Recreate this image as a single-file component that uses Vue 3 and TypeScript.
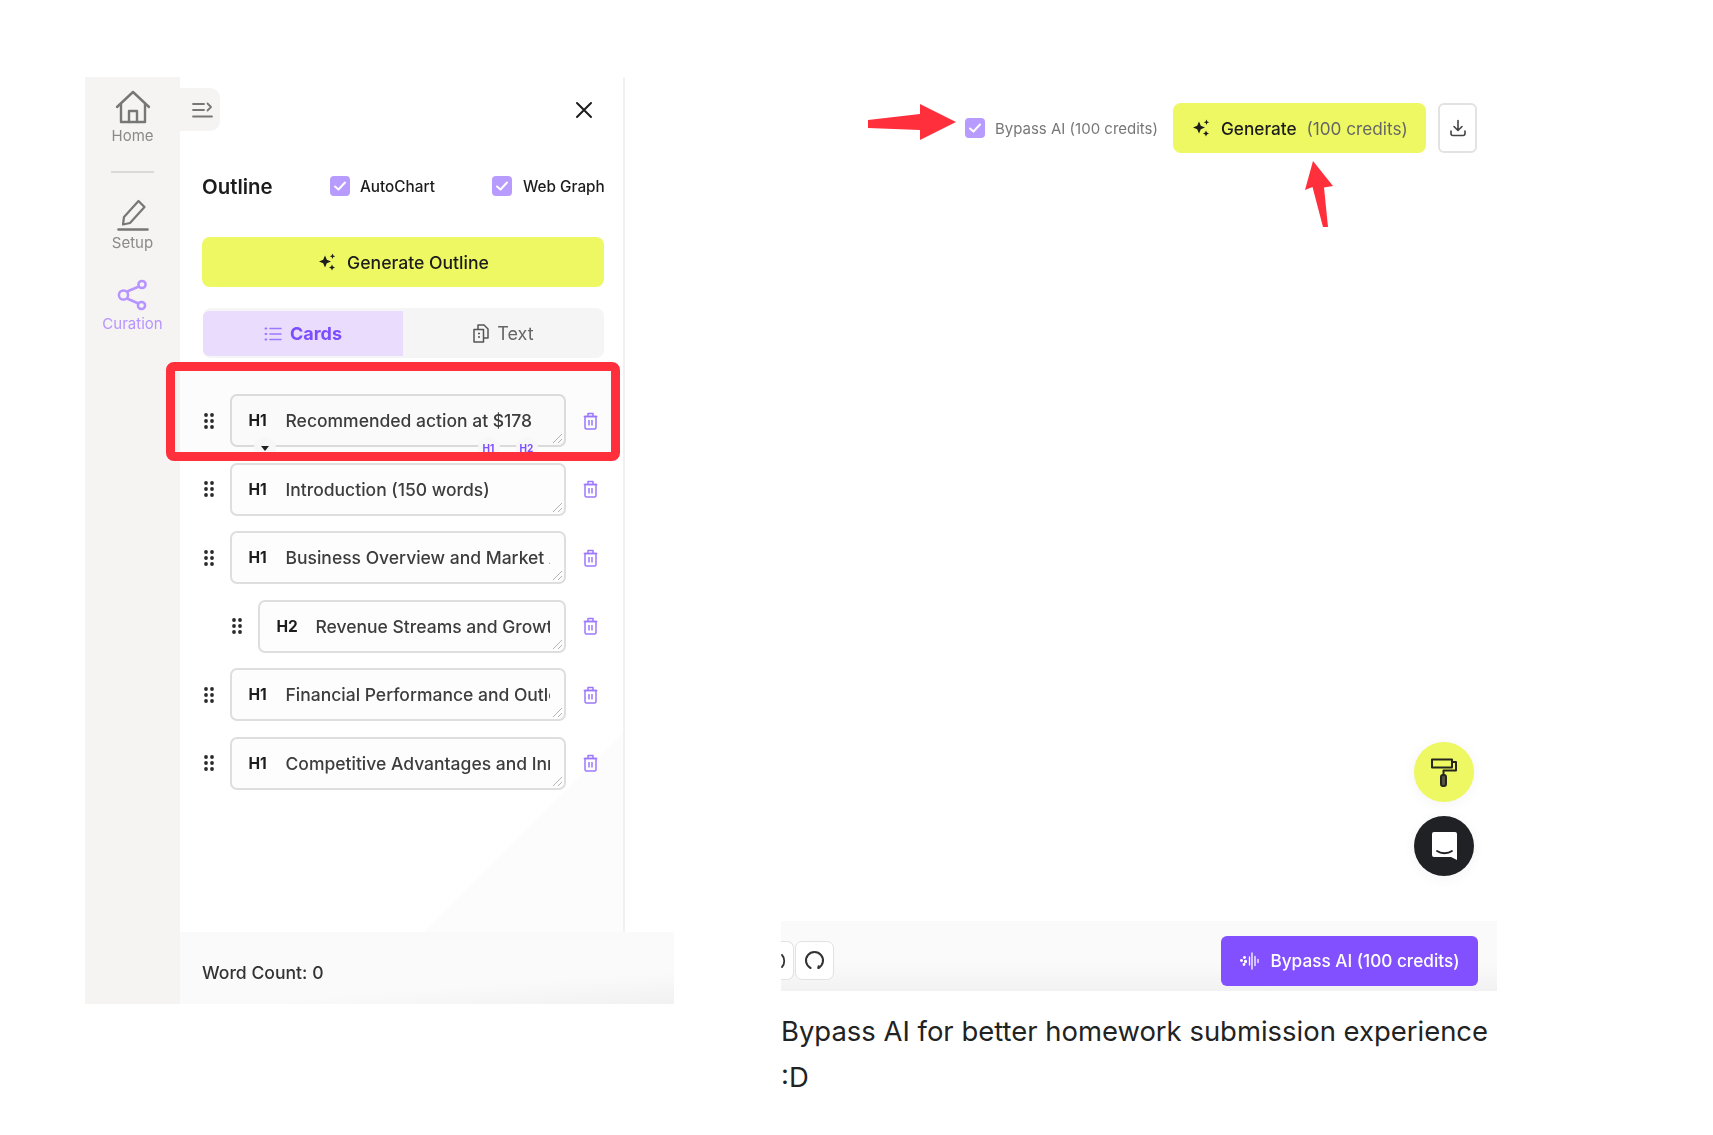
<script setup lang="ts">
interface OutlineRow {
  level: 'H1' | 'H2';
  title: string;
  menu?: boolean;
}

const rows: OutlineRow[] = [
  { level: 'H1', title: 'Recommended action at $178', menu: true },
  { level: 'H1', title: 'Introduction (150 words)' },
  { level: 'H1', title: 'Business Overview and Market Analysis' },
  { level: 'H2', title: 'Revenue Streams and Growth' },
  { level: 'H1', title: 'Financial Performance and Outlook' },
  { level: 'H1', title: 'Competitive Advantages and Innovation' }
];

const dots = [
  [2, 2], [8, 2],
  [2, 8], [8, 8],
  [2, 14], [8, 14]
];

const sparkle = 'M8 3.5 9.8 7.7 14 9.5 9.8 11.3 8 15.5 6.2 11.3 2 9.5 6.2 7.7ZM15.5 1.5l.8 1.9 1.9.8-1.9.8-.8 1.9-.8-1.9-1.9-.8 1.9-.8ZM15 12.5l.9 2.1 2.1.9-2.1.9-.9 2.1-.9-2.1-2.1-.9 2.1-.9Z';
</script>

<template>
  <div class="page">
    <section class="shot-left">
      <nav class="rail">
        <a class="rail-item home">
          <svg width="36" height="34" viewBox="0 0 36 34" fill="none" stroke="#777" stroke-width="2.4" stroke-linejoin="round" stroke-linecap="round">
            <path d="M2 17 18 2l16 15" />
            <path d="M6 14v18h24V14" />
            <path d="M14 32V21h8v11" />
          </svg>
          <span>Home</span>
        </a>
        <div class="rail-line"></div>
        <a class="rail-item setup">
          <svg width="32" height="32" viewBox="0 0 32 32" fill="none" stroke="#777" stroke-width="2.2" stroke-linejoin="round" stroke-linecap="round">
            <path d="M6 25.500 7 18 21.500 2l6 6L13 24Z" />
            <path d="M1.500 30.500h29" stroke-width="2.600" />
          </svg>
          <span>Setup</span>
        </a>
        <a class="rail-item curation">
          <svg width="30" height="32" viewBox="0 0 30 32" fill="none" stroke="#b794ff" stroke-width="2.5">
            <circle cx="6.5" cy="16" r="4.6" />
            <circle cx="25" cy="5.5" r="3.6" />
            <circle cx="24.5" cy="26.5" r="3.6" />
            <path d="M10 12.500 22 7.500M10 19.500l11.500 5" />
          </svg>
          <span>Curation</span>
        </a>
      </nav>

      <div class="main">
        <button class="collapse">
          <svg width="21" height="16" viewBox="0 0 21 16" fill="none" stroke="#777" stroke-width="1.800" stroke-linecap="round" stroke-linejoin="round">
            <path d="M1 2h11M1 8h11M1 14.500h19M15.500 1.500l3.500 3.500-3.500 3.500" />
          </svg>
        </button>

        <div class="panel">
          <div class="panel-top">
            <svg class="close" width="18" height="18" viewBox="0 0 18 18" fill="none" stroke="#1c1c1c" stroke-width="2" stroke-linecap="round">
              <path d="M2 2l14 14M16 2 2 16" />
            </svg>
          </div>

          <div class="outline-head">
            <h2>Outline</h2>
            <label class="check auto">
              <span class="box"><svg width="14" height="12" viewBox="0 0 14 12" fill="none" stroke="#fff" stroke-width="2" stroke-linecap="round" stroke-linejoin="round"><path d="M2 6.500l3.500 3L12 2.500" /></svg></span>
              AutoChart
            </label>
            <label class="check graph">
              <span class="box"><svg width="14" height="12" viewBox="0 0 14 12" fill="none" stroke="#fff" stroke-width="2" stroke-linecap="round" stroke-linejoin="round"><path d="M2 6.500l3.500 3L12 2.500" /></svg></span>
              Web Graph
            </label>
          </div>

          <button class="btn-yellow outline-btn">
            <svg width="20" height="20" viewBox="0 0 20 20" fill="#1c1c1c"><path :d="sparkle" /></svg>
            Generate Outline
          </button>

          <div class="tabs">
            <div class="tab active">
              <svg width="18" height="16" viewBox="0 0 18 16" fill="none" stroke="#9d78ff" stroke-width="1.600" stroke-linecap="round">
                <path d="M6 2.500h11M6 8h11M6 13.500h11" />
                <path d="M1.500 2.500h.8M1.500 8h.8M1.500 13.500h.8" stroke-width="2" />
              </svg>
              Cards
            </div>
            <div class="tab">
              <svg width="16" height="19" viewBox="0 0 16 19" fill="none" stroke="#555" stroke-width="1.500" stroke-linejoin="round">
                <path d="M1 5.500h9.500v12.500H1Z" />
                <path d="M5 5.500V1h6l4 4v9h-4.500" />
                <path d="M5 9.500h2M5 13h2" />
              </svg>
              Text
            </div>
          </div>

          <div class="rows">
            <div v-for="row in rows" :key="row.title" class="row" :class="{ nested: row.level === 'H2' }">
              <svg class="grip" width="10" height="16" viewBox="0 0 10 16" fill="#2a2a2a">
                <circle v-for="d in dots" :key="d.join()" :cx="d[0]" :cy="d[1]" r="1.900" />
              </svg>
              <div class="field">
                <b>{{ row.level }}</b>
                <span class="title">{{ row.title }}</span>
                <svg class="resize" width="11" height="11" viewBox="0 0 11 11" stroke="#b5b5b5" stroke-width="1">
                  <path d="M1 10 10 1M6 10l4-4" />
                </svg>
                <template v-if="row.menu">
                  <span class="chip caret"></span>
                  <span class="chip h1">H1</span>
                  <span class="chip h2">H2</span>
                </template>
              </div>
              <svg class="trash" width="15" height="18" viewBox="0 0 15 18" fill="none" stroke="#9d78ff" stroke-width="1.500" stroke-linejoin="round">
                <path d="M2 4.500h11V15.500a1.500 1.500 0 0 1-1.500 1.500h-8A1.500 1.500 0 0 1 2 15.500Z" />
                <path d="M.7 4.500h13.600M5 4.500V1.500h5v3M6 8v5.500M9 8v5.500" />
              </svg>
            </div>
          </div>
        </div>

        <footer class="word-count">Word Count: 0</footer>
      </div>

      <div class="red-box"></div>
    </section>

    <section class="shot-right">
      <div class="toolbar">
        <label class="check bypass">
          <span class="box"><svg width="14" height="12" viewBox="0 0 14 12" fill="none" stroke="#fff" stroke-width="2" stroke-linecap="round" stroke-linejoin="round"><path d="M2 6.500l3.500 3L12 2.500" /></svg></span>
          Bypass AI (100 credits)
        </label>
        <button class="btn-yellow generate">
          <svg width="20" height="20" viewBox="0 0 20 20" fill="#1c1c1c"><path :d="sparkle" /></svg>
          <span>Generate</span>
          <em>(100 credits)</em>
        </button>
        <button class="download">
          <svg width="18" height="18" viewBox="0 0 18 18" fill="none" stroke="#444" stroke-width="1.600" stroke-linecap="round" stroke-linejoin="round">
            <path d="M9 1.500v9.500M5 7.500 9 11.500l4-4" />
            <path d="M2 12v2.500a2 2 0 0 0 2 2h10a2 2 0 0 0 2-2V12" />
          </svg>
        </button>

        <svg class="arrow arrow-side" width="90" height="38" viewBox="0 0 90 38" fill="#ff2f3c">
          <path d="M0 17 52 11V1l36 18-36 18V27L0 25Z" />
        </svg>
        <svg class="arrow arrow-up" width="30" height="67" viewBox="0 0 30 67" fill="#ff2f3c">
          <path d="M9 0 29 25l-9 1.500L24 66h-5L8.500 26 1 29Z" />
        </svg>
      </div>

      <div class="fabs">
        <button class="fab paint">
          <svg width="26" height="29" viewBox="0 0 26 29" fill="none" stroke="#26261f" stroke-width="2" stroke-linejoin="round">
            <path d="M1 1.500h20v8H1Z" />
            <path d="M21 4h4v8.500H12.500V17" />
            <rect x="10" y="17" width="5" height="11" rx="2" fill="#55553f" />
          </svg>
        </button>
        <button class="fab chat">
          <svg width="27" height="30" viewBox="0 0 27 30" fill="#fff">
            <path d="M3 1h21a2 2 0 0 1 2 2v26l-6-3H3a2 2 0 0 1-2-2V3a2 2 0 0 1 2-2Z" />
            <path d="M6 20c4 3 11 3 15 0" fill="none" stroke="#202124" stroke-width="1.800" stroke-linecap="round" />
          </svg>
        </button>
      </div>

      <div class="action-bar">
        <div class="cut-btn">
          <svg width="6" height="16" viewBox="0 0 6 16" fill="none" stroke="#333" stroke-width="1.800" stroke-linecap="round"><path d="M1 2c3 3 3 9 0 12" /></svg>
        </div>
        <button class="refresh">
          <svg width="21" height="21" viewBox="0 0 21 21" fill="none" stroke="#333" stroke-width="2.100" stroke-linecap="round">
            <path d="M6.500 18A8.500 8.500 0 1 1 14.500 18" />
            <path d="M14.500 18l.1-1.800" />
          </svg>
        </button>
        <button class="bypass-btn">
          <svg width="22" height="18" viewBox="0 0 22 18" fill="#fff" stroke="#fff" stroke-width="1.300" stroke-linecap="round">
            <path d="M13 1v16M10.500 5v8M16 4.500v9M19 7.500v3" />
            <circle cx="2.500" cy="8.500" r=".8" />
            <circle cx="5.500" cy="5.500" r=".8" />
            <circle cx="6.500" cy="9.500" r="1" />
            <circle cx="5" cy="12.500" r=".8" />
          </svg>
          Bypass AI (100 credits)
        </button>
      </div>

      <p class="caption">Bypass AI for better homework submission experience<br />:D</p>
    </section>
  </div>
</template>

<style>
html,
body {
  background: #fff;
}
</style>

<style scoped>
.page {
  display: flex;
  align-items: flex-start;
  gap: 107px;
  padding: 77px 0 0 85px;
  font-family: Inter, "Liberation Sans", sans-serif;
  color: #1c1c1c;
}

button {
  font-family: inherit;
  border: none;
  padding: 0;
}

/* left screenshot */
.shot-left {
  position: relative;
  display: flex;
  width: 589px;
  height: 927px;
  filter: blur(0.35px);
}

.rail {
  width: 95px;
  flex: none;
  background: #f5f4f3;
  display: flex;
  flex-direction: column;
  align-items: center;
  padding-top: 13px;
  box-sizing: border-box;
}

.rail-item {
  display: flex;
  flex-direction: column;
  align-items: center;
  gap: 2.500px;
  font-size: 15px;
  line-height: 18px;
  color: #8a8a8a;
}

.rail-line {
  width: 43px;
  height: 2px;
  background: #d9d9d9;
  margin: 26px 0 26px;
}

.setup {
  gap: 3.500px;
}

.curation {
  margin-top: 27px;
  gap: 3.500px;
  color: #b794ff;
}

.main {
  position: relative;
  width: 494px;
  display: flex;
  flex-direction: column;
}

.collapse {
  position: absolute;
  left: 0;
  top: 11px;
  width: 40px;
  height: 43px;
  background: #f5f4f3;
  border-radius: 0 10px 10px 0;
  display: flex;
  align-items: center;
  justify-content: center;
  padding-left: 4px;
  box-sizing: border-box;
}

.panel {
  width: 445px;
  height: 855px;
  box-sizing: border-box;
  padding: 0 21px 0 22px;
  border-right: 2px solid #f1f1f1;
  background: linear-gradient(135deg, #fff 84.600%, #fcfcfc 84.600%);
}

.panel-top {
  height: 66px;
  display: flex;
  align-items: center;
  justify-content: flex-end;
}

.close {
  margin-right: 9px;
}

.outline-head {
  margin-top: 23px;
  height: 40px;
  display: flex;
  align-items: center;
}

.outline-head h2 {
  margin: 0;
  flex: none;
  width: 128px;
  font-size: 20.400px;
  font-weight: 600;
}

.check {
  display: flex;
  align-items: center;
  flex: none;
  font-size: 15.300px;
  font-weight: 500;
  white-space: nowrap;
}

.box {
  width: 20px;
  height: 20px;
  border-radius: 4px;
  background: #b79bff;
  display: flex;
  align-items: center;
  justify-content: center;
  margin-right: 10px;
}

.auto {
  width: 162px;
}

.graph .box {
  margin-right: 11px;
}

.btn-yellow {
  background: #edf862;
  border-radius: 8px;
  color: #1c1c1c;
  display: flex;
  align-items: center;
}

.outline-btn {
  margin-top: 31px;
  width: 402px;
  height: 50px;
  justify-content: center;
  gap: 10px;
  font-size: 17.600px;
  font-weight: 500;
}

.tabs {
  margin-top: 21px;
  width: 401px;
  margin-left: 1px;
  height: 50px;
  box-sizing: border-box;
  padding: 3px 0 2px 0;
  background: #f5f5f5;
  border-radius: 8px;
  display: grid;
  grid-template-columns: 200px 1fr;
}

.tab {
  display: flex;
  align-items: center;
  justify-content: center;
  gap: 8px;
  font-size: 18px;
  color: #666;
}

.tab.active {
  background: #e9dcfd;
  border-radius: 6px 0 0 6px;
  color: #7c4dff;
  font-weight: 700;
}

.rows {
  margin-top: 36px;
  display: flex;
  flex-direction: column;
  gap: 15.500px;
}

.row {
  height: 53px;
  display: flex;
  align-items: center;
}

.row.nested {
  padding-left: 28px;
}

.grip {
  flex: none;
  width: 10px;
  margin-right: 15.500px;
  margin-left: 2px;
}

.field {
  position: relative;
  flex: 1;
  height: 53px;
  min-width: 0;
  box-sizing: border-box;
  display: flex;
  align-items: center;
  padding: 0 14px 0 17px;
  background: #fdfdfd;
  border: 2px solid #dedede;
  border-radius: 7px;
  font-size: 17.500px;
  white-space: nowrap;
}

.field b {
  flex: none;
  width: 37px;
  font-size: 15.500px;
  font-weight: 700;
}

.nested .field b {
  width: 39px;
}

.title {
  flex: 1;
  min-width: 0;
  overflow: hidden;
  font-weight: 500;
  color: #3d3d3d;
}

.resize {
  position: absolute;
  right: 1px;
  bottom: 1px;
}

.chip {
  position: absolute;
  top: 41px;
  width: 22px;
  height: 22px;
  border-radius: 50%;
  background: #fafafa;
  font-size: 10px;
  font-weight: 700;
  color: #8250ff;
  text-align: center;
  line-height: 22px;
}

.caret {
  left: 22px;
}

.caret::after {
  content: "";
  position: absolute;
  left: 7px;
  top: 9px;
  border: 4px solid transparent;
  border-top: 5px solid #222;
}

.h1 {
  left: 246px;
}

.h2 {
  left: 284px;
}

.trash {
  flex: none;
  margin-left: 17px;
  margin-right: 4px;
}

.word-count {
  height: 72px;
  box-sizing: border-box;
  padding: 30px 0 0 22px;
  font-size: 17.600px;
  line-height: 22px;
  font-weight: 500;
  color: #333;
  background: linear-gradient(176deg, #fafafa 70%, #f1f1f1 100%);
}

.red-box {
  position: absolute;
  left: 81px;
  top: 285px;
  width: 454px;
  height: 99px;
  box-sizing: border-box;
  border: 9px solid #ff2f3c;
  border-radius: 8px;
  background: rgba(0, 0, 0, 0.012);
}

/* right screenshot */
.shot-right {
  width: 716px;
  margin-top: 26px;
  display: flex;
  flex-direction: column;
}

.toolbar {
  position: relative;
  height: 50px;
  display: flex;
  align-items: center;
  justify-content: flex-end;
  padding-right: 20px;
}

.bypass {
  font-size: 15px;
  font-weight: 400;
  color: #777;
  margin-right: 15px;
  filter: blur(0.35px);
}

.generate {
  width: 253px;
  height: 50px;
  padding-left: 18px;
  box-sizing: border-box;
  gap: 10px;
  font-size: 17.200px;
  font-weight: 500;
  filter: blur(0.35px);
}

.generate em {
  font-style: normal;
  font-weight: 400;
  color: #666;
}

.download {
  width: 39px;
  height: 50px;
  margin-left: 12px;
  background: #fff;
  border: 2px solid #e2e2e2;
  border-radius: 6px;
  display: flex;
  align-items: center;
  justify-content: center;
}

.arrow {
  position: absolute;
}

.arrow-side {
  left: 87px;
  top: 0;
}

.arrow-up {
  left: 523px;
  top: 58px;
}

.fabs {
  margin-top: 589px;
  align-self: flex-end;
  margin-right: 23px;
  display: flex;
  flex-direction: column;
  gap: 14px;
}

.fab {
  width: 60px;
  height: 60px;
  border-radius: 50%;
  display: flex;
  align-items: center;
  justify-content: center;
  box-shadow: 0 2px 14px rgba(0, 0, 0, 0.05);
}

.paint {
  background: #edf862;
}

.chat {
  background: #202124;
}

.action-bar {
  margin-top: 45px;
  height: 70px;
  box-sizing: border-box;
  padding-top: 9px;
  display: flex;
  align-items: center;
  background: linear-gradient(180deg, #fafafa 60%, #f2f2f2 100%);
}

.cut-btn {
  width: 13px;
  height: 39px;
  box-sizing: border-box;
  background: #fff;
  border: 1.500px solid #e2e2e2;
  border-left: none;
  border-radius: 0 7px 7px 0;
  display: flex;
  align-items: center;
}

.refresh {
  width: 39px;
  height: 39px;
  margin-left: 1px;
  background: #fff;
  border: 1.500px solid #e2e2e2;
  border-radius: 7px;
  display: flex;
  align-items: center;
  justify-content: center;
}

.bypass-btn {
  margin-left: auto;
  margin-right: 19px;
  width: 257px;
  height: 50px;
  background: #8250ff;
  border-radius: 6px;
  color: #fff;
  font-size: 17.200px;
  font-weight: 500;
  display: flex;
  align-items: center;
  justify-content: center;
  gap: 9px;
  filter: blur(0.3px);
}

.caption {
  margin: 18px 0 0;
  font-size: 27.450px;
  line-height: 45.500px;
  color: #222;
}
</style>
